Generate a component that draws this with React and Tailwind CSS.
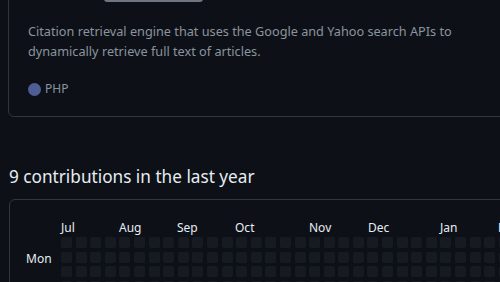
import React from "react";

const months = [
  { name: "Jul", left: 61 },
  { name: "Aug", left: 119 },
  { name: "Sep", left: 177 },
  { name: "Oct", left: 235 },
  { name: "Nov", left: 309 },
  { name: "Dec", left: 368 },
  { name: "Jan", left: 440 },
  { name: "Feb", left: 498 },
];

export default function App() {
  const cols = Array.from({ length: 31 });
  const rows = Array.from({ length: 4 });
  return (
    <div
      className="w-[500px] h-[282px] overflow-hidden bg-[#0d1117] text-[#e6edf3]"
      style={{ fontFamily: '"Noto Sans", "Open Sans", sans-serif' }}
    >
      {/* Pinned repo card */}
      <div className="ml-[8px] w-[560px] -mt-[40px] h-[157px] rounded-[6px] border border-[#30363d] pl-[19px] pt-[20px]">
        <div className="h-[21px] flex">
          <div className="ml-[76px] mt-[18px] w-[99px] h-[3px] rounded-b-[3px] bg-[#6e7681]" />
        </div>
        <p className="mt-[19px] text-[12.7px] leading-[20px] text-[#8b949e] w-[440px]">
          Citation retrieval engine that uses the Google and Yahoo search APIs to dynamically retrieve full text of articles.
        </p>
        <div className="mt-[18px] flex items-center gap-[4px] text-[12px] leading-[20px] text-[#8b949e]">
          <span className="w-[13px] h-[13px] rounded-full bg-[#4f5d95]" />
          <span>PHP</span>
        </div>
      </div>

      <h2 className="ml-[9px] mt-[47px] text-[17.2px] leading-[26px] font-normal text-[#e6edf3]">
        9 contributions in the last year
      </h2>

      <div className="ml-[9px] mt-[9px] w-[560px] h-[120px] rounded-[6px] border border-[#30363d]">
        <div className="relative h-[37px] text-[12px] leading-[14px] text-[#e6edf3]">
          {months.map((m) => (
            <span key={m.name} className="absolute top-[21px]" style={{ left: m.left - 10 }}>
              {m.name}
            </span>
          ))}
        </div>
        <div className="flex">
          <div className="w-[51px] grid grid-rows-[repeat(4,11px)] gap-y-[3.6px] text-[12px] leading-[11px] text-[#e6edf3]">
            <span />
            <span className="pl-[16px] pt-[1px]">Mon</span>
            <span />
            <span className="pl-[16px] pt-[1px]">Wed</span>
          </div>
          <div className="grid grid-flow-col grid-rows-[repeat(4,11px)] auto-cols-[11px] gap-[3.6px]">
            {cols.map((_, c) =>
              rows.map((_, r) => (
                <div
                  key={c + "-" + r}
                  className="w-[11px] h-[11px] rounded-[2px] bg-[#161b22] outline outline-1 -outline-offset-1 outline-[#1b1f230f]"
                />
              ))
            )}
          </div>
        </div>
      </div>
    </div>
  );
}
